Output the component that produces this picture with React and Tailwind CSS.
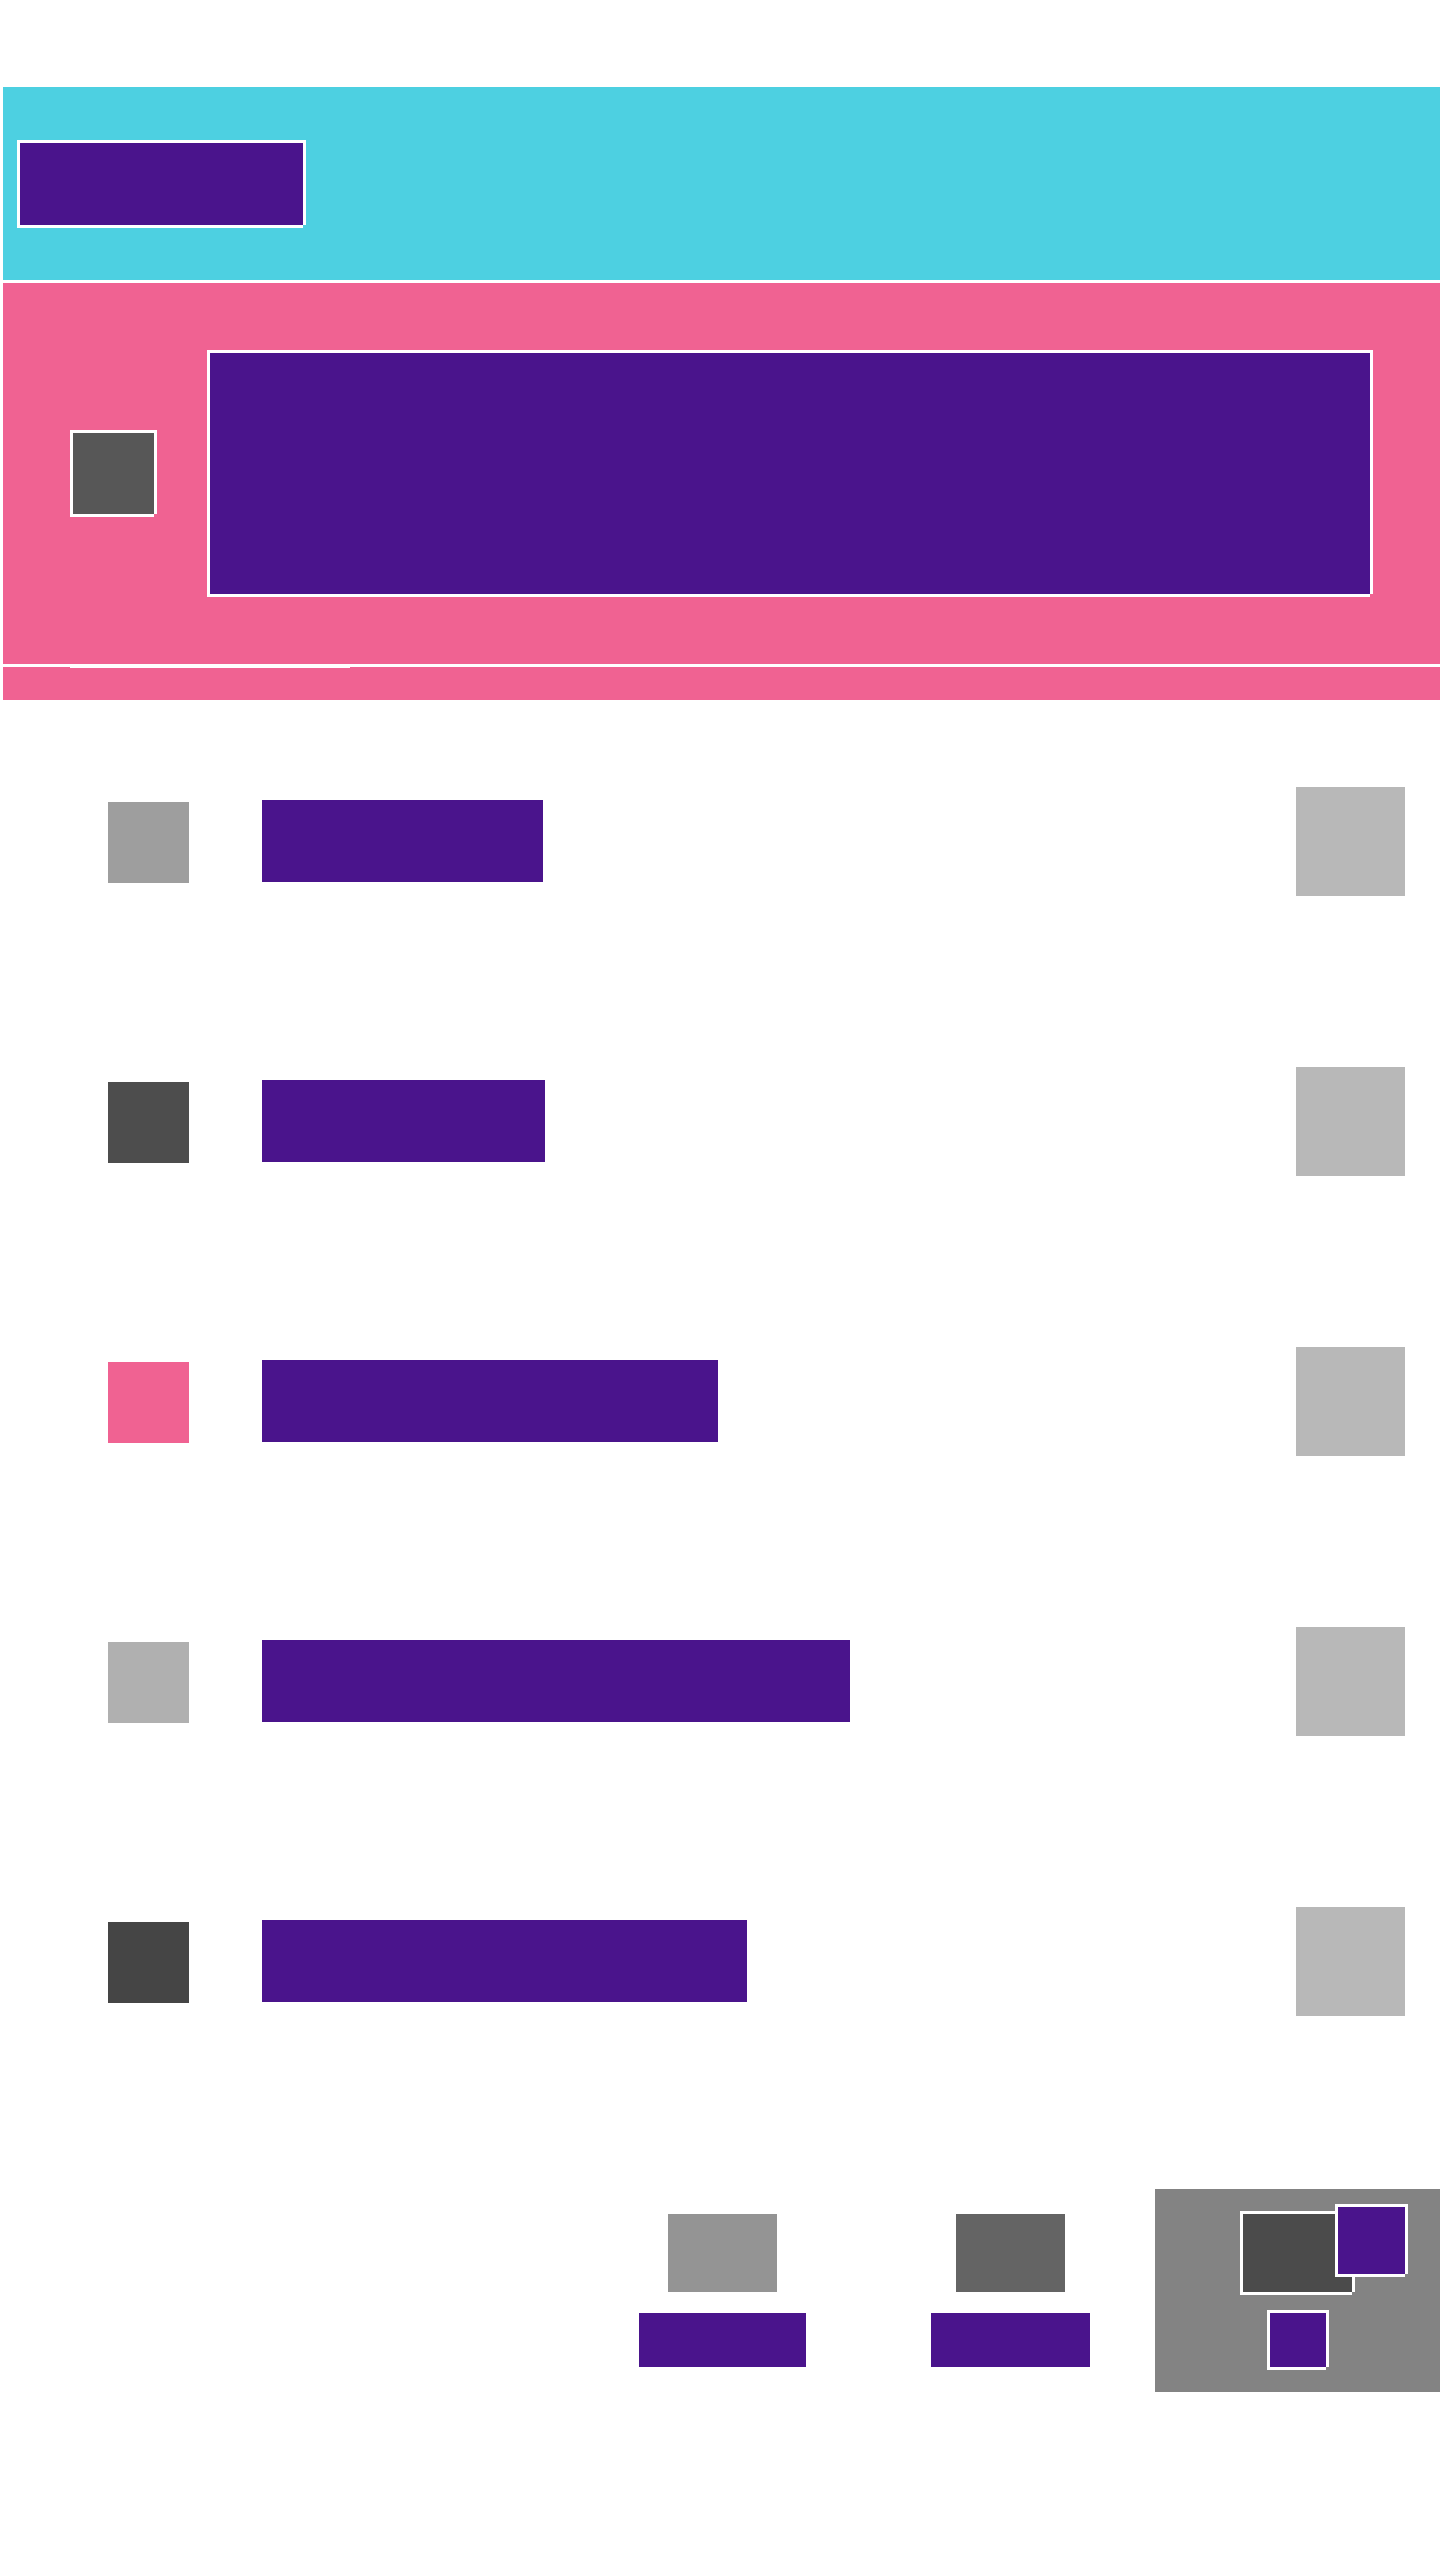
const frame =
  'shadow-[-3px_-3px_0_#fff,3px_-3px_0_#fff,-3px_3px_0_#fff,3px_0_0_#fff,0_3px_0_#fff]'

const rows = [
  { icon: 'bg-[#9e9e9e]', bar: 'w-[281px]' },
  { icon: 'bg-[#4d4d4d]', bar: 'w-[283px]' },
  { icon: 'bg-[#f06292]', bar: 'w-[456px]' },
  { icon: 'bg-[#b0b0b0]', bar: 'w-[588px]' },
  { icon: 'bg-[#454545]', bar: 'w-[485px]' },
]

function Row({ icon, bar }) {
  return (
    <div className="flex h-[280px] items-center">
      <div className={`ml-[105px] mt-[2px] h-[81px] w-[81px] ${icon}`} />
      <div className={`ml-[73px] h-[82px] bg-[#4a148c] ${bar}`} />
      <div className="ml-auto mr-[35px] h-[109px] w-[109px] bg-[#b8b8b8]" />
    </div>
  )
}

function NavItem({ box, label, className = '' }) {
  return (
    <div className={`flex h-[203px] flex-col items-center pt-[25px] ${className}`}>
      <div className={`h-[78px] w-[109px] ${box}`} />
      <div className={`mt-[21px] h-[54px] bg-[#4a148c] ${label}`} />
    </div>
  )
}

export default function App() {
  return (
    <div className="min-h-[2560px] bg-white pl-[3px] pt-[87px] font-['Liberation_Sans',sans-serif]">
      {/* barra superior */}
      <header className="flex h-[193px] items-center bg-[#4dd0e1] pl-[17px]">
        <div className={`h-[82px] w-[283px] bg-[#4a148c] ${frame}`} />
      </header>

      {/* hero */}
      <section className="mt-[3px] flex h-[381px] items-center bg-[#f06292] pl-[70px] pr-[70px]">
        <div className={`h-[81px] w-[81px] shrink-0 bg-[#575757] ${frame}`} />
        <div className={`ml-[56px] h-[241px] flex-1 bg-[#4a148c] ${frame}`} />
      </section>

      {/* pestañas */}
      <nav className="mt-[3px] h-[33px] bg-[#f06292] pl-[67px]">
        <div className="h-px w-[280px] bg-white" />
      </nav>

      {/* lista */}
      <div className="pt-px">
        {rows.map((r, i) => (
          <Row key={i} {...r} />
        ))}
      </div>

      {/* navegación inferior */}
      <footer className="mt-[88px] flex justify-end">
        <NavItem box="bg-[#949494]" label="w-[167px]" className="w-[288px]" />
        <NavItem box="bg-[#646464]" label="w-[159px]" className="mr-px w-[288px]" />
        <div className="flex h-[203px] w-[285px] flex-col items-center bg-[#838383] pt-[25px]">
          <div className={`relative h-[78px] w-[109px] bg-[#4b4b4b] ${frame}`}>
            <div className={`absolute left-[95px] top-[-7px] h-[67px] w-[67px] bg-[#4a148c] ${frame}`} />
          </div>
          <div className={`mt-[21px] h-[54px] w-[56px] bg-[#4a148c] ${frame}`} />
        </div>
      </footer>
    </div>
  )
}
